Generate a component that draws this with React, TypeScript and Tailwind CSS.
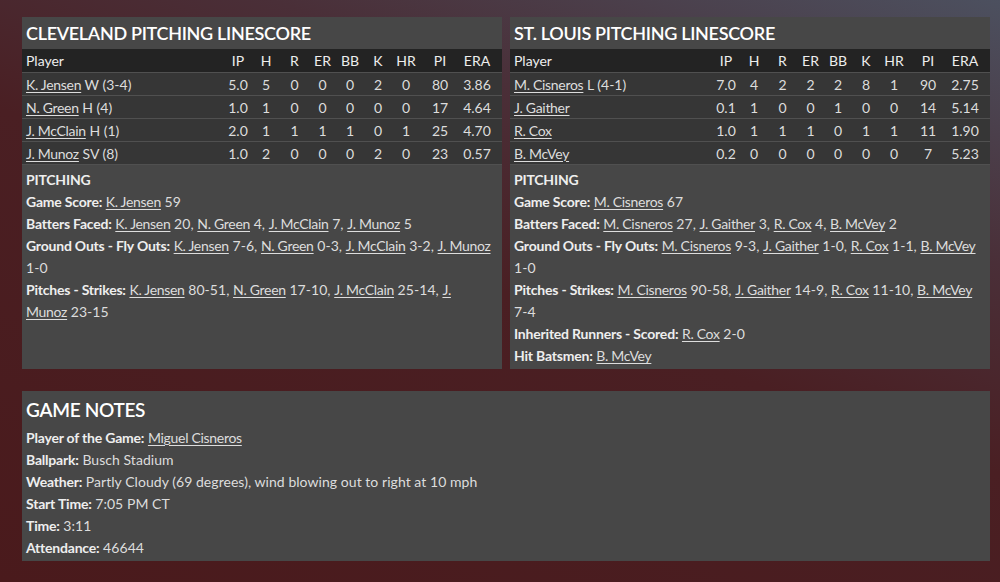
import React from "react";

type Row = { name: string; note?: string; stats: string[] };

const cle: Row[] = [
  { name: "K. Jensen", note: "W (3-4)", stats: ["5.0", "5", "0", "0", "0", "2", "0", "80", "3.86"] },
  { name: "N. Green", note: "H (4)", stats: ["1.0", "1", "0", "0", "0", "0", "0", "17", "4.64"] },
  { name: "J. McClain", note: "H (1)", stats: ["2.0", "1", "1", "1", "1", "0", "1", "25", "4.70"] },
  { name: "J. Munoz", note: "SV (8)", stats: ["1.0", "2", "0", "0", "0", "2", "0", "23", "0.57"] },
];
const stl: Row[] = [
  { name: "M. Cisneros", note: "L (4-1)", stats: ["7.0", "4", "2", "2", "2", "8", "1", "90", "2.75"] },
  { name: "J. Gaither", stats: ["0.1", "1", "0", "0", "1", "0", "0", "14", "5.14"] },
  { name: "R. Cox", stats: ["1.0", "1", "1", "1", "0", "1", "1", "11", "1.90"] },
  { name: "B. McVey", stats: ["0.2", "0", "0", "0", "0", "0", "0", "7", "5.23"] },
];
const heads = ["IP", "H", "R", "ER", "BB", "K", "HR", "PI", "ERA"];
const grid = "grid grid-cols-[1fr_28px_28px_29px_27px_28px_28px_28px_40px_34px] pr-2 pl-1 items-center";

const L = ({ children }: { children: React.ReactNode }) => (
  <span className="underline underline-offset-2 decoration-1 tracking-[-0.3px]">{children}</span>
);
const B = ({ children }: { children: React.ReactNode }) => (
  <span className="font-bold text-[#eeeeee] tracking-[-0.2px]">{children}</span>
);

function Table({ rows }: { rows: Row[] }) {
  return (
    <div>
      <div className={`${grid} h-[23px] bg-[#232323] text-[#eeeeee]`}>
        <div>Player</div>
        {heads.map((h) => (
          <div key={h} className="text-center">{h}</div>
        ))}
      </div>
      {rows.map((r) => (
        <div key={r.name} className={`${grid} h-[23px] bg-[#363636] border-t border-[#505050] text-[#dddddd]`}>
          <div>
            <L>{r.name}</L>
            {r.note ? " " + r.note : ""}
          </div>
          {r.stats.map((s, i) => (
            <div key={i} className="text-center">{s}</div>
          ))}
        </div>
      ))}
      <div className="border-t border-[#505050]" />
    </div>
  );
}

function Panel({ title, rows, children }: { title: string; rows: Row[]; children: React.ReactNode }) {
  return (
    <div className="flex-1 bg-[#474747] flex flex-col">
      <div className="h-8 flex items-center px-1 text-[18px] tracking-[-0.3px] font-semibold text-white leading-none">{title}</div>
      <Table rows={rows} />
      <div className="pl-1 pr-[10px] pt-1 pb-0.5 leading-[22px] text-[#dddddd] tracking-[0.05px]">{children}</div>
    </div>
  );
}

export default function App() {
  return (
    <div
      className="w-[1000px] h-[582px] overflow-hidden pl-[22px] pr-[10px] pt-[17px] text-[14px] bg-[linear-gradient(200deg,#4c505f_0%,#4a2f38_28%,#4a1f23_50%,#4a1a1c_100%)]"
      style={{ fontFamily: "Lato, 'Noto Sans', sans-serif" }}
    >
      <div className="flex gap-2">
        <Panel title="CLEVELAND PITCHING LINESCORE" rows={cle}>
          <div><B>PITCHING</B></div>
          <div><B>Game Score:</B> <L>K. Jensen</L> 59</div>
          <div><B>Batters Faced:</B> <L>K. Jensen</L> 20, <L>N. Green</L> 4, <L>J. McClain</L> 7, <L>J. Munoz</L> 5</div>
          <div><B>Ground Outs - Fly Outs:</B> <L>K. Jensen</L> 7-6, <L>N. Green</L> 0-3, <L>J. McClain</L> 3-2, <L>J. Munoz</L> 1-0</div>
          <div><B>Pitches - Strikes:</B> <L>K. Jensen</L> 80-51, <L>N. Green</L> 17-10, <L>J. McClain</L> 25-14, <L>J. Munoz</L> 23-15</div>
        </Panel>
        <Panel title="ST. LOUIS PITCHING LINESCORE" rows={stl}>
          <div><B>PITCHING</B></div>
          <div><B>Game Score:</B> <L>M. Cisneros</L> 67</div>
          <div><B>Batters Faced:</B> <L>M. Cisneros</L> 27, <L>J. Gaither</L> 3, <L>R. Cox</L> 4, <L>B. McVey</L> 2</div>
          <div><B>Ground Outs - Fly Outs:</B> <L>M. Cisneros</L> 9-3, <L>J. Gaither</L> 1-0, <L>R. Cox</L> 1-1, <L>B. McVey</L> 1-0</div>
          <div><B>Pitches - Strikes:</B> <L>M. Cisneros</L> 90-58, <L>J. Gaither</L> 14-9, <L>R. Cox</L> 11-10, <L>B. McVey</L> 7-4</div>
          <div><B>Inherited Runners - Scored:</B> <L>R. Cox</L> 2-0</div>
          <div><B>Hit Batsmen:</B> <L>B. McVey</L></div>
        </Panel>
      </div>
      <div className="mt-[22px] bg-[#474747]">
        <div className="h-9 flex items-center px-1 text-[19px] tracking-[-0.3px] font-semibold text-white leading-none">GAME NOTES</div>
        <div className="px-1 pb-0.5 leading-[22px] text-[#dddddd] tracking-[0.05px]">
          <div><B>Player of the Game:</B> <L>Miguel Cisneros</L></div>
          <div><B>Ballpark:</B> Busch Stadium</div>
          <div><B>Weather:</B> Partly Cloudy (69 degrees), wind blowing out to right at 10 mph</div>
          <div><B>Start Time:</B> 7:05 PM CT</div>
          <div><B>Time:</B> 3:11</div>
          <div><B>Attendance:</B> 46644</div>
        </div>
      </div>
    </div>
  );
}
